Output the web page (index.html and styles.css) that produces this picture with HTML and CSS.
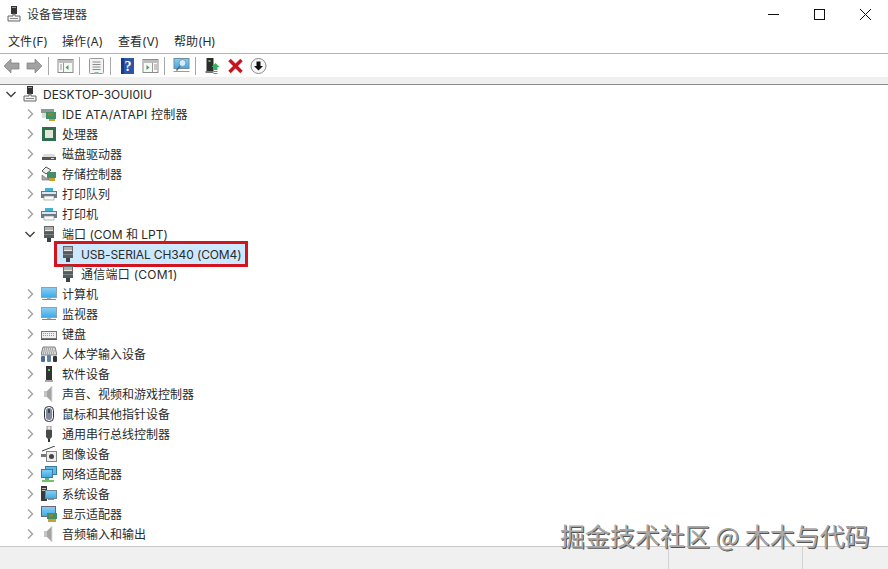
FILE: index.html
```html
<!DOCTYPE html>
<html lang="zh-CN">
<head>
  <meta charset="UTF-8" />
  <title>设备管理器</title>
  <link rel="stylesheet" href="styles.css">
</head>
<body>
  <svg class="defs" width="0" height="0">
    <defs>
      <linearGradient id="screen" x1="0" y1="0" x2="0" y2="1">
        <stop offset="0" stop-color="#8ad0f4" />
        <stop offset="1" stop-color="#3ea8e4" />
      </linearGradient>
      <symbol id="i-pc" viewBox="0 0 16 16">
        <rect x="5" y="0" width="6" height="8" fill="#333" />
        <rect x="6" y="1" width="4" height="1" fill="#999" />
        <path d="M7 8h2v2h5v5H2v-5h5z" fill="#f2f2f2" stroke="#666" />
        <rect x="4" y="12" width="8" height="1" fill="#888" />
      </symbol>
      <symbol id="i-ide" viewBox="0 0 16 16">
        <path d="M0 3h13v4H0z" fill="#8a9a94" />
        <path d="M1 7h5v5H1z" fill="#d8dcd8" />
        <rect x="5" y="6" width="10" height="7" fill="#3f9068" />
        <rect x="7" y="7" width="5" height="3" fill="#7d8a3c" />
        <rect x="8" y="13" width="6" height="2" fill="#c8a030" />
      </symbol>
      <symbol id="i-cpu" viewBox="0 0 16 16">
        <rect x="1" y="1" width="14" height="14" fill="#2f6e4c" />
        <rect x="4" y="4" width="8" height="8" fill="#e2e6d8" />
      </symbol>
      <symbol id="i-disk" viewBox="0 0 16 16">
        <path d="M3 8h10l2 3H1z" fill="#dcdcdc" />
        <rect x="1" y="11" width="14" height="3" fill="#555" />
        <rect x="10" y="12" width="3" height="1" fill="#ddd" />
      </symbol>
      <symbol id="i-storage" viewBox="0 0 16 16">
        <path d="M5 1l5 3-5 4-4-3z" fill="#eee" stroke="#555" />
        <path d="M1 9l4 3h3v2H1z" fill="#aaa" stroke="#666" stroke-width=".6" />
        <rect x="6" y="6" width="9" height="6" fill="#3f9068" />
        <rect x="8" y="12" width="6" height="3" fill="#c8a030" />
      </symbol>
      <symbol id="i-printer" viewBox="0 0 16 16">
        <rect x="4" y="2" width="8" height="3" fill="#45b0d0" />
        <path d="M0 5h16v7h-3v-2H3v2H0z" fill="#68798a" />
        <rect x="1" y="6" width="14" height="2" fill="#dfe5ea" />
        <rect x="3" y="10" width="10" height="4" fill="#fafafa" stroke="#888" stroke-width=".6" />
      </symbol>
      <symbol id="i-port" viewBox="0 0 16 16">
        <rect x="3.500" y="0.500" width="9" height="5" fill="#e8e8e8" stroke="#666" />
        <path d="M5 1v3M7 1v3M9 1v3M11 1v3" stroke="#777" />
        <rect x="3" y="6" width="10" height="6" fill="#555c60" />
        <rect x="3" y="8" width="10" height="1" fill="#7c8488" />
        <rect x="6" y="12" width="4" height="4" fill="#3c4246" />
      </symbol>
      <symbol id="i-monitor" viewBox="0 0 16 16">
        <rect x="0.500" y="1.500" width="15" height="10" fill="url(#screen)" stroke="#8aa4b4" />
        <rect x="6" y="12" width="4" height="1" fill="#aab4ba" />
        <rect x="1" y="13" width="14" height="1" fill="#7d8a92" />
      </symbol>
      <symbol id="i-keyboard" viewBox="0 0 16 16">
        <rect x="0.500" y="5.500" width="15" height="7" fill="#efefef" stroke="#777" />
        <path d="M2 7.500h12M2 9.500h12" stroke="#9a9a9a" stroke-dasharray="1 1" />
        <rect x="0" y="13" width="16" height="1" fill="#555" />
      </symbol>
      <symbol id="i-hid" viewBox="0 0 16 16">
        <path d="M2 1h12l2 8H0z" fill="#d8d8d8" stroke="#666" stroke-width=".8" />
        <path d="M3 3h10M2.500 5h11M2 7h12" stroke="#777" stroke-dasharray="1 1" />
        <rect x="0" y="10" width="4" height="6" rx="1" fill="#4a6a94" />
        <rect x="6" y="9" width="4" height="7" rx="1" fill="#66809f" />
        <rect x="12" y="10" width="4" height="6" rx="1" fill="#333" />
      </symbol>
      <symbol id="i-software" viewBox="0 0 16 16">
        <rect x="5" y="0" width="6" height="14" fill="#333" />
        <rect x="7" y="3" width="2" height="2" fill="#5fd07a" />
        <rect x="4" y="14" width="8" height="2" fill="#aaa" />
      </symbol>
      <symbol id="i-audio" viewBox="0 0 16 16">
        <rect x="3" y="5" width="3" height="6" fill="#c4c4c4" />
        <path d="M6 5l5-5v16l-5-5z" fill="#a4a4a4" />
        <path d="M11 0v16" stroke="#ddd" />
      </symbol>
      <symbol id="i-mouse" viewBox="0 0 16 16">
        <rect x="3.500" y="0.500" width="9" height="15" rx="4" fill="#eef" stroke="#333" />
        <rect x="5" y="2" width="6" height="12" rx="3" fill="#7f8a99" />
        <rect x="7" y="3" width="2" height="4" fill="#445" />
      </symbol>
      <symbol id="i-usb" viewBox="0 0 16 16">
        <rect x="6" y="0" width="4" height="4" fill="#e8e8e8" stroke="#666" stroke-width=".7" />
        <path d="M5 4h6v7l-2 2H7l-2-2z" fill="#4a4a4a" />
        <rect x="7" y="13" width="2" height="3" fill="#333" />
      </symbol>
      <symbol id="i-image" viewBox="0 0 16 16">
        <path d="M1 5L14 0" stroke="#444" />
        <path d="M0 8h5v3H0z" fill="#777" />
        <rect x="5.500" y="5.500" width="10" height="10" fill="#eee" stroke="#888" />
        <circle cx="10.500" cy="10.500" r="2.500" fill="#444" />
      </symbol>
      <symbol id="i-network" viewBox="0 0 16 16">
        <rect x="4.500" y="0.500" width="11" height="8" fill="#5fb8e8" stroke="#3a7ca0" />
        <rect x="0.500" y="3.500" width="11" height="8" fill="url(#screen)" stroke="#3a7ca0" />
        <rect x="4" y="12" width="4" height="2" fill="#6a9" />
        <rect x="1" y="14" width="12" height="2" fill="#6fc46a" />
      </symbol>
      <symbol id="i-system" viewBox="0 0 16 16">
        <rect x="0" y="0" width="6" height="15" fill="#3a3a3a" />
        <rect x="1" y="2" width="4" height="1" fill="#bbb" />
        <rect x="1" y="4" width="4" height="1" fill="#bbb" />
        <rect x="4.500" y="4.500" width="11" height="8" fill="url(#screen)" stroke="#6a8a9c" />
        <rect x="7" y="13" width="6" height="1" fill="#889" />
      </symbol>
      <symbol id="i-display" viewBox="0 0 16 16">
        <rect x="0.500" y="0.500" width="14" height="10" fill="url(#screen)" stroke="#667" />
        <rect x="6" y="7" width="10" height="6" fill="#3f9068" />
        <rect x="8" y="8" width="4" height="3" fill="#7d8a3c" />
        <rect x="7" y="13" width="8" height="3" fill="#c8a030" />
      </symbol>
      <symbol id="t-back" viewBox="0 0 16 16">
        <path d="M0.500 8l7-7v4h8v6h-8v4z" fill="#a2a2a2" stroke="#7c7c7c" stroke-width=".7" />
      </symbol>
      <symbol id="t-forward" viewBox="0 0 16 16">
        <path d="M15.500 8l-7-7v4h-8v6h8v4z" fill="#a2a2a2" stroke="#7c7c7c" stroke-width=".7" />
      </symbol>
      <symbol id="t-tree" viewBox="0 0 16 16">
        <rect x="0.500" y="1.500" width="15" height="13" fill="#f8f8f8" stroke="#8c8c8c" />
        <rect x="1" y="2" width="14" height="3" fill="#bcbcbc" />
        <path d="M6 5v9M2.500 7h2M2.500 9h2M2.500 11h2" stroke="#999" />
        <path d="M11 7v5l-3-2.500z" fill="#3aa860" />
      </symbol>
      <symbol id="t-props" viewBox="0 0 16 16">
        <rect x="1" y="0.500" width="14" height="15" rx="1" fill="#f3f3f3" stroke="#999" />
        <path d="M4 4h8M4 6.500h8M4 9h8M4 11.500h8" stroke="#8a8a8a" />
        <rect x="6" y="14" width="4" height="2" fill="#7cc09a" />
      </symbol>
      <symbol id="t-help" viewBox="0 0 16 16">
        <rect x="1.500" y="0" width="13" height="16" fill="#2c55a8" />
        <rect x="1.500" y="0" width="3" height="16" fill="#1b3a80" />
        <text x="8.500" y="13" class="help-mark">?</text>
      </symbol>
      <symbol id="t-pane" viewBox="0 0 16 16">
        <rect x="0.500" y="1.500" width="15" height="13" fill="#f8f8f8" stroke="#8c8c8c" />
        <rect x="1" y="2" width="14" height="3" fill="#bcbcbc" />
        <path d="M10 5v9M11.500 7h3M11.500 9h3M11.500 11h3" stroke="#999" />
        <path d="M4 7v5l3-2.500z" fill="#3aa860" />
      </symbol>
      <symbol id="t-scan" viewBox="0 0 16 16">
        <rect x="0.500" y="0.500" width="15" height="10" fill="url(#screen)" stroke="#6a8fa5" />
        <circle cx="9" cy="5" r="3.500" fill="#d6eefa" stroke="#7a9aac" />
        <path d="M6.500 8L3 12.500" stroke="#667" stroke-width="1.500" />
        <rect x="0" y="13" width="16" height="1" fill="#99a" />
      </symbol>
      <symbol id="t-update" viewBox="0 0 16 16">
        <rect x="2" y="0" width="7" height="13" fill="#2c2c2c" />
        <rect x="4" y="2" width="2" height="2" fill="#58c070" />
        <rect x="1" y="13" width="8" height="2" fill="#777" />
        <path d="M7 9l4-4 4 4h-2v3H9V9z" fill="#34b060" />
        <rect x="9" y="13" width="4" height="1" fill="#34b060" />
        <rect x="9" y="15" width="4" height="1" fill="#34b060" />
      </symbol>
      <symbol id="t-remove" viewBox="0 0 16 16">
        <path d="M2 2l12 12M14 2L2 14" stroke="#c8141e" stroke-width="3.500" />
      </symbol>
      <symbol id="t-down" viewBox="0 0 16 16">
        <circle cx="8" cy="8" r="7.500" fill="#f8f8f8" stroke="#888" />
        <path d="M6 3.500h4V8h2.500L8 12.500 3.500 8H6z" fill="#111" />
      </symbol>
      <symbol id="c-right" viewBox="0 0 16 16">
        <path d="M6 3.500L10.500 8 6 12.500" fill="none" stroke="#a6a6a6" stroke-width="1.500" />
      </symbol>
      <symbol id="c-down" viewBox="0 0 16 16">
        <path d="M3.500 6L8 10.500 12.500 6" fill="none" stroke="#444" stroke-width="1.500" />
      </symbol>
    </defs>
  </svg>

  <div class="window">
    <header class="titlebar">
      <svg class="title-icon"><use href="#i-pc" /></svg>
      <span class="title-text">设备管理器</span>
      <div class="win-controls">
        <svg class="win-btn" viewBox="0 0 46 28"><path d="M18 14.500h11" stroke="#111" /></svg>
        <svg class="win-btn" viewBox="0 0 46 28"><rect x="18.500" y="9.500" width="10" height="10" fill="none" stroke="#111" /></svg>
        <svg class="win-btn" viewBox="0 0 46 28"><path d="M18 9l11 11M29 9L18 20" stroke="#111" /></svg>
      </div>
    </header>

    <nav class="menubar">
      <span>文件(F)</span>
      <span>操作(A)</span>
      <span>查看(V)</span>
      <span>帮助(H)</span>
    </nav>

    <div class="toolbar">
      <svg class="tool"><use href="#t-back" /></svg>
      <svg class="tool"><use href="#t-forward" /></svg>
      <i class="sep"></i>
      <svg class="tool"><use href="#t-tree" /></svg>
      <i class="sep"></i>
      <svg class="tool"><use href="#t-props" /></svg>
      <i class="sep"></i>
      <svg class="tool"><use href="#t-help" /></svg>
      <svg class="tool"><use href="#t-pane" /></svg>
      <i class="sep"></i>
      <svg class="tool"><use href="#t-scan" /></svg>
      <i class="sep"></i>
      <svg class="tool"><use href="#t-update" /></svg>
      <svg class="tool"><use href="#t-remove" /></svg>
      <svg class="tool"><use href="#t-down" /></svg>
    </div>
    <div class="toolbar-band"></div>

    <ul class="tree">
      <li class="row root"><svg class="twisty"><use href="#c-down" /></svg><svg class="icon"><use href="#i-pc" /></svg><span>DESKTOP-3OUI0IU</span></li>
      <li class="row"><svg class="twisty"><use href="#c-right" /></svg><svg class="icon"><use href="#i-ide" /></svg><span class="wide">IDE ATA/ATAPI 控制器</span></li>
      <li class="row"><svg class="twisty"><use href="#c-right" /></svg><svg class="icon"><use href="#i-cpu" /></svg><span>处理器</span></li>
      <li class="row"><svg class="twisty"><use href="#c-right" /></svg><svg class="icon"><use href="#i-disk" /></svg><span>磁盘驱动器</span></li>
      <li class="row"><svg class="twisty"><use href="#c-right" /></svg><svg class="icon"><use href="#i-storage" /></svg><span>存储控制器</span></li>
      <li class="row"><svg class="twisty"><use href="#c-right" /></svg><svg class="icon"><use href="#i-printer" /></svg><span>打印队列</span></li>
      <li class="row"><svg class="twisty"><use href="#c-right" /></svg><svg class="icon"><use href="#i-printer" /></svg><span>打印机</span></li>
      <li class="row"><svg class="twisty"><use href="#c-down" /></svg><svg class="icon"><use href="#i-port" /></svg><span>端口 (COM 和 LPT)</span></li>
      <li class="row child"><div class="selected"><svg class="icon"><use href="#i-port" /></svg><span>USB-SERIAL CH340 (COM4)</span></div></li>
      <li class="row child"><svg class="icon"><use href="#i-port" /></svg><span class="wide">通信端口 (COM1)</span></li>
      <li class="row"><svg class="twisty"><use href="#c-right" /></svg><svg class="icon"><use href="#i-monitor" /></svg><span>计算机</span></li>
      <li class="row"><svg class="twisty"><use href="#c-right" /></svg><svg class="icon"><use href="#i-monitor" /></svg><span>监视器</span></li>
      <li class="row"><svg class="twisty"><use href="#c-right" /></svg><svg class="icon"><use href="#i-keyboard" /></svg><span>键盘</span></li>
      <li class="row"><svg class="twisty"><use href="#c-right" /></svg><svg class="icon"><use href="#i-hid" /></svg><span>人体学输入设备</span></li>
      <li class="row"><svg class="twisty"><use href="#c-right" /></svg><svg class="icon"><use href="#i-software" /></svg><span>软件设备</span></li>
      <li class="row"><svg class="twisty"><use href="#c-right" /></svg><svg class="icon"><use href="#i-audio" /></svg><span>声音、视频和游戏控制器</span></li>
      <li class="row"><svg class="twisty"><use href="#c-right" /></svg><svg class="icon"><use href="#i-mouse" /></svg><span>鼠标和其他指针设备</span></li>
      <li class="row"><svg class="twisty"><use href="#c-right" /></svg><svg class="icon"><use href="#i-usb" /></svg><span>通用串行总线控制器</span></li>
      <li class="row"><svg class="twisty"><use href="#c-right" /></svg><svg class="icon"><use href="#i-image" /></svg><span>图像设备</span></li>
      <li class="row"><svg class="twisty"><use href="#c-right" /></svg><svg class="icon"><use href="#i-network" /></svg><span>网络适配器</span></li>
      <li class="row"><svg class="twisty"><use href="#c-right" /></svg><svg class="icon"><use href="#i-system" /></svg><span>系统设备</span></li>
      <li class="row"><svg class="twisty"><use href="#c-right" /></svg><svg class="icon"><use href="#i-display" /></svg><span>显示适配器</span></li>
      <li class="row"><svg class="twisty"><use href="#c-right" /></svg><svg class="icon"><use href="#i-audio" /></svg><span>音频输入和输出</span></li>
    </ul>

    <footer class="statusbar">
      <div class="status-main"></div>
      <div class="status-cell"></div>
      <div class="status-cell"></div>
    </footer>
  </div>

  <div class="watermark">掘金技术社区 @ 木木与代码</div>
</body>
</html>
```

FILE: styles.css
```css
* {
  box-sizing: border-box;
}
html, body {
  height: 100%;
}
body {
  margin: 0;
  background: white;
  color: #2a2a2a;
  font-family: Inter, "Noto Sans CJK SC", sans-serif;
  font-size: 12px;
  line-height: 16px;
  overflow: hidden;
}
.defs {
  position: absolute;
}
.help-mark {
  fill: white;
  font-family: "Liberation Serif", serif;
  font-size: 14px;
  font-weight: bold;
  text-anchor: middle;
}
.window {
  display: flex;
  flex-direction: column;
  height: 100%;
}

.titlebar {
  display: flex;
  align-items: center;
  height: 28px;
  padding-left: 6px;
  flex: none;
}
.title-icon {
  width: 16px;
  height: 16px;
}
.title-text {
  margin: 2px 0 0 5px;
  color: #333;
}
.win-controls {
  display: flex;
  margin-left: auto;
}
.win-btn {
  width: 46px;
  height: 28px;
}

.menubar {
  display: flex;
  align-items: center;
  gap: 16px;
  height: 26px;
  padding-left: 8px;
  border-bottom: 1px solid #b5b5b5;
  flex: none;
}
.menubar span {
  width: 40px;
  margin-top: 2px;
  white-space: nowrap;
}
.menubar span:first-child {
  width: 38px;
}

.toolbar {
  display: flex;
  align-items: center;
  height: 23px;
  flex: none;
}
.tool {
  width: 23px;
  height: 16px;
}
.sep {
  width: 1px;
  height: 18px;
  margin: 0 5px 0 2px;
  background: #a8a8a8;
}
.toolbar-band {
  height: 8px;
  background: #f0f0f0;
  border-bottom: 1px solid #8a8a8a;
  flex: none;
}

.tree {
  list-style: none;
  margin: -1px 0 0;
  padding: 0;
  flex: 1;
}
.row {
  display: flex;
  align-items: center;
  height: 20px;
  padding-left: 22px;
  white-space: nowrap;
}
.row span {
  margin-top: 2px;
}
.row.root {
  padding-left: 3px;
}
.row.child {
  padding-left: 60px;
}
.wide {
  letter-spacing: 0.25px;
}
.twisty {
  width: 16px;
  height: 16px;
  margin-right: 3px;
  flex: none;
}
.icon {
  width: 16px;
  height: 16px;
  margin-right: 5px;
  flex: none;
}
.selected {
  display: flex;
  align-items: center;
  height: 20px;
  margin-left: -3px;
  padding: 0 4px 0 3px;
  background: #cce8ff;
  letter-spacing: -0.13px;
  outline: 3px solid #d2141e;
}

.statusbar {
  display: flex;
  height: 23px;
  background: #f0f0f0;
  border-top: 1px solid #c8c8c8;
  flex: none;
}
.status-main {
  width: 668px;
}
.status-cell {
  width: 134px;
  border-left: 1px solid #d2d2d2;
}
.status-cell:last-child {
  width: 86px;
}

.watermark {
  position: absolute;
  left: 560px;
  top: 517px;
  color: #a8a8a8;
  font-family: "Noto Sans CJK SC", sans-serif;
  font-size: 25px;
  line-height: 36px;
  white-space: nowrap;
  text-shadow: 1px 1px 0 #555;
}
```
